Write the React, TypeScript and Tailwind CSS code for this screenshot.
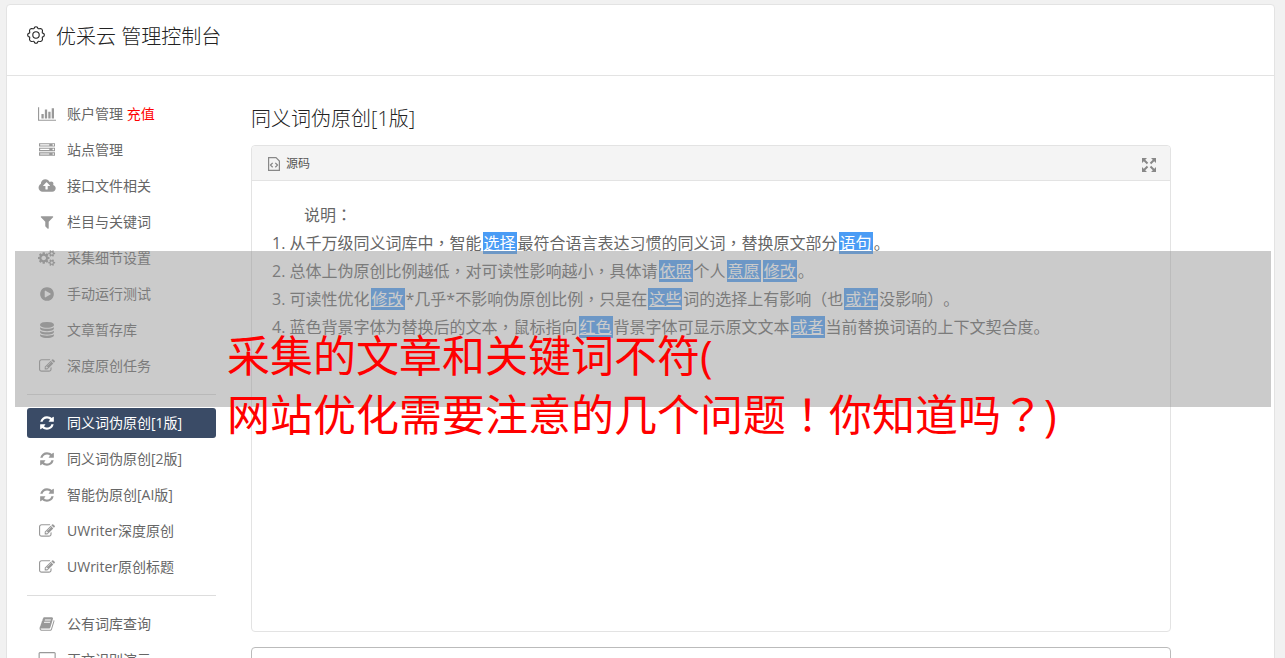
import type { ReactNode } from 'react';

interface IconShape {
  width: number;
  path: string;
}

const icons: Record<string, IconShape> = {
  chart: {
    width: 2048,
    path: 'M640 896v512h-256v-512h256zm384-512v1024h-256v-1024h256zm1024 1152v128h-2048v-1536h128v1408h1920zm-640-896v768h-256v-768h256zm384-384v1152h-256v-1152h256z',
  },
  server: {
    width: 1792,
    path: 'M128 1408h1024v-128h-1024v128zm0-512h1024v-128h-1024v128zm1568 448q0-40-28-68t-68-28-68 28-28 68 28 68 68 28 68-28 28-68zm-1568-960h1024v-128h-1024v128zm1568 448q0-40-28-68t-68-28-68 28-28 68 28 68 68 28 68-28 28-68zm0-512q0-40-28-68t-68-28-68 28-28 68 28 68 68 28 68-28 28-68zm96 832v384h-1792v-384h1792zm0-512v384h-1792v-384h1792zm0-512v384h-1792v-384h1792z',
  },
  upload: {
    width: 2048,
    path: 'M1344 864q0-14-9-23l-352-352q-9-9-23-9t-23 9l-351 351q-10 12-10 24 0 14 9 23t23 9h224v352q0 13 9.5 22.5t22.5 9.5h192q13 0 22.5-9.5t9.5-22.5v-352h224q13 0 22.5-9.5t9.5-22.5zm640 288q0 159-112.5 271.5t-271.5 112.5h-1088q-185 0-316.5-131.5t-131.5-316.5q0-130 70-240t188-165q-2-30-2-43 0-212 150-362t362-150q156 0 285.5 87t188.5 231q71-62 166-62 106 0 181 75t75 181q0 76-41 138 130 31 213.5 135.5t83.5 238.5z',
  },
  filter: {
    width: 1792,
    path: 'M1595 295q17 41-14 70l-493 493v742q0 42-39 59-13 5-25 5-27 0-45-19l-256-256q-19-19-19-45v-486l-493-493q-31-29-14-70 17-39 59-39h1280q42 0 59 39z',
  },
  cogs: {
    width: 2048,
    path: 'M896 896q0-106-75-181t-181-75-181 75-75 181 75 181 181 75 181-75 75-181zm768 512q0-52-38-90t-90-38-90 38-38 90q0 53 37.5 90.5t90.5 37.5 90.5-37.5 37.5-90.5zm0-1024q0-52-38-90t-90-38-90 38-38 90q0 53 37.5 90.5t90.5 37.5 90.5-37.5 37.5-90.5zm-384 421v185q0 10-7 19.5t-16 10.5l-155 24q-11 35-32 76 34 48 90 115 7 11 7 20 0 12-7 19-23 30-82.5 89.5t-78.5 59.5q-11 0-21-7l-115-90q-37 19-77 31-11 108-23 155-7 24-30 24h-186q-11 0-20-7.5t-10-17.5l-23-153q-34-10-75-31l-118 89q-7 7-20 7-11 0-21-8-144-133-144-160 0-9 7-19 10-14 41-53t47-61q-23-44-35-82l-152-24q-10-1-17-9.5t-7-19.5v-185q0-10 7-19.5t16-10.5l155-24q11-35 32-76-34-48-90-115-7-11-7-20 0-12 7-20 22-30 82-89t79-59q11 0 21 7l115 90q34-18 77-32 11-108 23-154 7-24 30-24h186q11 0 20 7.5t10 17.5l23 153q34 10 75 31l118-89q8-7 20-7 11 0 21 8 144 133 144 160 0 8-7 19-12 16-42 54t-45 60q23 48 34 82l152 23q10 2 17 10.5t7 19.5zm640 533v140q0 16-149 31-12 27-30 52 51 113 51 138 0 4-4 7-122 71-124 71-8 0-46-47t-52-68q-20 2-30 2t-30-2q-14 21-52 68t-46 47q-2 0-124-71-4-3-4-7 0-25 51-138-18-25-30-52-149-15-149-31v-140q0-16 149-31 13-29 30-52-51-113-51-138 0-4 4-7 4-2 35-20t59-34 30-16q8 0 46 46.5t52 67.5q20-2 30-2t30 2q51-71 92-112l6-2q4 0 124 70 4 3 4 7 0 25-51 138 17 23 30 52 149 15 149 31zm0-1024v140q0 16-149 31-12 27-30 52 51 113 51 138 0 4-4 7-122 71-124 71-8 0-46-47t-52-68q-20 2-30 2t-30-2q-14 21-52 68t-46 47q-2 0-124-71-4-3-4-7 0-25 51-138-18-25-30-52-149-15-149-31v-140q0-16 149-31 13-29 30-52-51-113-51-138 0-4 4-7 4-2 35-20t59-34 30-16q8 0 46 46.5t52 67.5q20-2 30-2t30 2q51-71 92-112l6-2q4 0 124 70 4 3 4 7 0 25-51 138 17 23 30 52 149 15 149 31z',
  },
  play: {
    width: 1792,
    path: 'M896 128q209 0 385.5 103t279.5 279.5 103 385.5-103 385.5-279.5 279.5-385.5 103-385.5-103-279.5-279.5-103-385.5 103-385.5 279.5-279.5 385.5-103zm384 823q32-18 32-55t-32-55l-544-320q-31-19-64-1-32 19-32 56v640q0 37 32 56 16 8 32 8 17 0 32-9z',
  },
  database: {
    width: 1792,
    path: 'M896 768q237 0 443-43t325-127v170q0 69-103 128t-280 93.5-385 34.5-385-34.5-280-93.5-103-128v-170q119 84 325 127t443 43zm0 768q237 0 443-43t325-127v170q0 69-103 128t-280 93.5-385 34.5-385-34.5-280-93.5-103-128v-170q119 84 325 127t443 43zm0-384q237 0 443-43t325-127v170q0 69-103 128t-280 93.5-385 34.5-385-34.5-280-93.5-103-128v-170q119 84 325 127t443 43zm0-1152q208 0 385 34.5t280 93.5 103 128v128q0 69-103 128t-280 93.5-385 34.5-385-34.5-280-93.5-103-128v-128q0-69 103-128t280-93.5 385-34.5z',
  },
  edit: {
    width: 1792,
    path: 'M888 1184l116-116-152-152-116 116v56h96v96h56zm440-720q-16-16-33 1l-350 350q-17 17-1 33t33-1l350-350q17-17 1-33zm80 594v190q0 119-84.5 203.5t-203.5 84.5h-832q-119 0-203.5-84.5t-84.5-203.5v-832q0-119 84.5-203.5t203.5-84.5h832q63 0 117 25 15 7 18 23 3 17-9 29l-49 49q-14 14-32 8-23-6-45-6h-832q-66 0-113 47t-47 113v832q0 66 47 113t113 47h832q66 0 113-47t47-113v-126q0-13 9-22l64-64q15-15 35-7t20 29zm-96-738l288 288-672 672h-288v-288zm444 132l-92 92-288-288 92-92q28-28 68-28t68 28l152 152q28 28 28 68t-28 68z',
  },
  refresh: {
    width: 1792,
    path: 'M1639 1056q0 5-1 7-64 268-268 434.5t-478 166.5q-146 0-282.5-55t-243.5-157l-129 129q-19 19-45 19t-45-19-19-45v-448q0-26 19-45t45-19h448q26 0 45 19t19 45-19 45l-137 137q71 66 161 102t187 36q134 0 250-65t186-179q11-17 53-117 8-23 30-23h192q13 0 22.5 9.5t9.5 22.5zm25-800v448q0 26-19 45t-45 19h-448q-26 0-45-19t-19-45 19-45l138-138q-148-137-349-137-134 0-250 65t-186 179q-11 17-53 117-8 23-30 23h-199q-13 0-22.5-9.5t-9.5-22.5v-7q65-268 270-434.5t480-166.5q146 0 284 55.5t245 156.5l130-129q19-19 45-19t45 19 19 45z',
  },
  book: {
    width: 1792,
    path: 'M1703 478q40 57 18 129l-275 906q-19 64-76.5 107.5t-122.5 43.5h-923q-77 0-148.5-53.5t-99.5-131.5q-24-67-2-127 0-4 3-27t4-37q1-8-3-21.5t-3-19.5q2-11 8-21t16.5-23.5 16.5-23.5q23-38 45-91.5t30-91.5q3-10 .5-30t-.5-28q3-11 17-28t17-23q21-36 42-92t25-90q1-9-2.5-32t.5-28q4-13 22-30.5t22-22.5q19-26 42.5-84.5t27.5-96.5q1-8-3-25.5t-2-26.5q2-8 9-18t18-23 17-21q8-12 16.5-30.5t15-35 16-36 19.5-32 26.5-23.5 36-11.5 47.5 5.5l-1 3q38-9 51-9h761q74 0 114 56t18 130l-274 906q-36 119-71.5 153.5t-128.5 34.5h-869q-27 0-38 15-11 16-1 43 24 70 144 70h923q29 0 56-15.5t35-41.5l300-987q7-22 5-57 38 15 59 43zm-1064 2q-4 13 2 22.5t20 9.5h608q13 0 25.5-9.5t16.5-22.5l21-64q4-13-2-22.5t-20-9.5h-608q-13 0-25.5 9.5t-16.5 22.5zm-83 256q-4 13 2 22.5t20 9.5h608q13 0 25.5-9.5t16.5-22.5l21-64q4-13-2-22.5t-20-9.5h-608q-13 0-25.5 9.5t-16.5 22.5z',
  },
  desktop: {
    width: 2048,
    path: 'M1856 992v-832q0-13-9.500-22.500t-22.500-9.500h-1600q-13 0-22.500 9.500t-9.500 22.500v832q0 13 9.500 22.500t22.500 9.500h1600q13 0 22.500-9.500t9.500-22.500zm128-832v1088q0 66-47 113t-113 47h-544q0 37 16 77.500t32 71 16 43.500q0 26-19 45t-45 19h-512q-26 0-45-19t-19-45q0-14 16-44t32-70 16-78h-544q-66 0-113-47t-47-113v-1088q0-66 47-113t113-47h1600q66 0 113 47t47 113z',
  },
};

function Icon({ name }: { name: string }) {
  const { width, path } = icons[name];
  return (
    <svg viewBox={`0 0 ${width} 1792`} className="h-4 w-auto" fill="currentColor" aria-hidden="true">
      <path d={path} />
    </svg>
  );
}

function GearIcon() {
  return (
    <svg viewBox="0 0 18 18" className="size-[18px]" fill="none" stroke="currentColor" strokeWidth="1.1" aria-hidden="true">
      <path
        strokeLinejoin="round"
        d="M7.600 1.200Q9 .200 10.400 1.200L11 2.600Q11.500 2.900 12 2.700L13.500 2.500Q15.200 2.800 15.500 4.500L15.300 6Q15.200 6.500 15.400 7L16.800 7.600Q17.800 9 16.800 10.400L15.400 11Q15.200 11.500 15.300 12L15.500 13.500Q15.200 15.200 13.500 15.500L12 15.300Q11.500 15.200 11 15.400L10.400 16.800Q9 17.800 7.600 16.800L7 15.400Q6.500 15.200 6 15.300L4.500 15.500Q2.800 15.200 2.500 13.500L2.700 12Q2.800 11.500 2.600 11L1.200 10.400Q.200 9 1.200 7.600L2.600 7Q2.800 6.500 2.700 6L2.500 4.500Q2.800 2.800 4.500 2.500L6 2.700Q6.500 2.900 7 2.600z"
      />
      <circle cx="9" cy="9" r="3.200" />
    </svg>
  );
}

function SourceIcon() {
  return (
    <svg viewBox="0 0 12 14" className="h-[14px] w-3 text-[#888]" fill="none" stroke="currentColor" aria-hidden="true">
      <path d="M.6.600h7.400l3.400 3.400v9.400H.600z" strokeWidth="1.200" />
      <path d="M4.700 5.900 2.500 8.100l2.200 2.200M7.300 5.900l2.200 2.200-2.200 2.200" strokeWidth="1.300" />
    </svg>
  );
}

function ExpandIcon() {
  return (
    <svg viewBox="0 0 14 14" className="size-[14px]" fill="currentColor" stroke="currentColor" aria-hidden="true">
      <path stroke="none" d="M0 0h5L0 5zM14 0v5L9 0zM0 14V9l5 5zM14 14H9l5-5z" />
      <path strokeWidth="2" d="m1.500 1.500 4 4m7-4-4 4m-7 7 4-4m7 4-4-4" />
    </svg>
  );
}

interface MenuItem {
  icon: string;
  label: string;
  note?: string;
  active?: boolean;
}

const menuGroups: MenuItem[][] = [
  [
    { icon: 'chart', label: '账户管理', note: '充值' },
    { icon: 'server', label: '站点管理' },
    { icon: 'upload', label: '接口文件相关' },
    { icon: 'filter', label: '栏目与关键词' },
    { icon: 'cogs', label: '采集细节设置' },
    { icon: 'play', label: '手动运行测试' },
    { icon: 'database', label: '文章暂存库' },
    { icon: 'edit', label: '深度原创任务' },
  ],
  [
    { icon: 'refresh', label: '同义词伪原创[1版]', active: true },
    { icon: 'refresh', label: '同义词伪原创[2版]' },
    { icon: 'refresh', label: '智能伪原创[AI版]' },
    { icon: 'edit', label: 'UWriter深度原创' },
    { icon: 'edit', label: 'UWriter原创标题' },
  ],
  [
    { icon: 'book', label: '公有词库查询' },
    { icon: 'desktop', label: '正文识别演示' },
  ],
];

function MenuLink({ item }: { item: MenuItem }) {
  return (
    <a
      href="#"
      className={
        item.active
          ? 'flex h-[30px] items-center gap-2.5 rounded-[3px] bg-[#3a4b66] px-2.5 text-white'
          : 'flex h-[30px] items-center gap-2.5 px-2.5 text-[#666]'
      }
    >
      <span className={item.active ? 'flex w-5 justify-center' : 'flex w-5 justify-center text-[#999]'}>
        <Icon name={item.icon} />
      </span>
      <span className="whitespace-nowrap">
        {item.label}
        {item.note && <span className="text-[#f00]"> {item.note}</span>}
      </span>
    </a>
  );
}

function Sidebar() {
  return (
    <nav className="flex w-[189px] shrink-0 flex-col gap-1.5 text-sm">
      {menuGroups.map((group, i) => (
        <div key={group[0].label} className="flex flex-col gap-1.5">
          {i > 0 && <hr className="my-[7px] border-[#ddd]" />}
          {group.map((item) => (
            <MenuLink key={item.label} item={item} />
          ))}
        </div>
      ))}
    </nav>
  );
}

// Sets commas, colons and the like in the middle of their square
function Text({ children }: { children: string }) {
  return children.split(/([，：！？（）])/).map((part, i) =>
    i % 2 ? (
      <span key={i} lang="zh-TW" className="font-['Noto_Sans_CJK_TC',sans-serif] leading-none">
        {part}
      </span>
    ) : (
      part
    )
  );
}

// A word that has been swapped for a synonym
function Word({ children }: { children: ReactNode }) {
  return <span className="mx-px bg-[#4a9cf5] px-px text-white underline">{children}</span>;
}

function SourcePanel() {
  return (
    <section className="min-h-[487px] rounded border border-[#e3e3e3]">
      <div className="flex h-[35px] items-center justify-between rounded-t border-b border-[#e3e3e3] bg-[#f4f4f4] pt-0.5 pr-3.5 pl-4">
        <button type="button" className="flex items-center gap-1.5 text-xs text-[#555]">
          <SourceIcon />
          源码
        </button>
        <button type="button" aria-label="全屏" className="pt-0.5 text-[#888]">
          <ExpandIcon />
        </button>
      </div>
      <div className="px-5 pt-5 text-base leading-7 text-[#666]">
        <p className="indent-8">
          <Text>说明：</Text>
        </p>
        <p>
          <Text>1. 从千万级同义词库中，智能</Text>
          <Word>选择</Word>
          <Text>最符合语言表达习惯的同义词，替换原文部分</Text>
          <Word>语句</Word>。
        </p>
        <p>
          <Text>2. 总体上伪原创比例越低，对可读性影响越小，具体请</Text>
          <Word>依照</Word>个人<Word>意愿</Word>
          <Word>修改</Word>。
        </p>
        <p>
          3. 可读性优化<Word>修改</Word>
          <Text>*几乎*不影响伪原创比例，只是在</Text>
          <Word>这些</Word>
          <Text>词的选择上有影响（也</Text>
          <Word>或许</Word>
          <Text>没影响）。</Text>
        </p>
        <p>
          <Text>4. 蓝色背景字体为替换后的文本，鼠标指向</Text>
          <Word>红色</Word>背景字体可显示原文文本<Word>或者</Word>
          当前替换词语的上下文契合度。
        </p>
      </div>
    </section>
  );
}

export default function App() {
  return (
    <div
      lang="zh-CN"
      className="relative h-screen overflow-hidden bg-[#f1f1f1] px-1.5 pt-1 font-['Open_Sans','Noto_Sans_CJK_SC',sans-serif] [text-spacing-trim:space-all]"
    >
      <div className="mr-1 min-h-full rounded-t border border-[#e3e3e3] bg-white">
        <header className="flex h-[71px] items-start gap-[11px] border-b border-[#e3e3e3] px-5 pt-4 text-[#222]">
          <span className="flex h-7 items-center">
            <GearIcon />
          </span>
          <h1 className="text-xl leading-8 font-light">优采云 管理控制台</h1>
        </header>
        <div className="flex gap-[35px] px-5 pt-[23px]">
          <Sidebar />
          <main className="max-w-[920px] flex-1">
            <h2 className="pt-1 pb-2.5 text-xl leading-8 font-light text-[#222]">同义词伪原创[1版]</h2>
            <SourcePanel />
            <textarea
              aria-label="正文"
              className="mt-[15px] block h-40 w-full resize-none rounded border border-[#bbb]"
            />
          </main>
        </div>
      </div>

      <div className="absolute top-[251px] right-3.5 left-[15px] h-[156px] bg-[#929292]/48 pt-[75px] pl-[212px]">
        <p className="text-[43px] leading-[59px] whitespace-nowrap text-[#f00]">
          采集的文章和关键词不符(
          <br />
          <Text>网站优化需要注意的几个问题！你知道吗？)</Text>
        </p>
      </div>
    </div>
  );
}
